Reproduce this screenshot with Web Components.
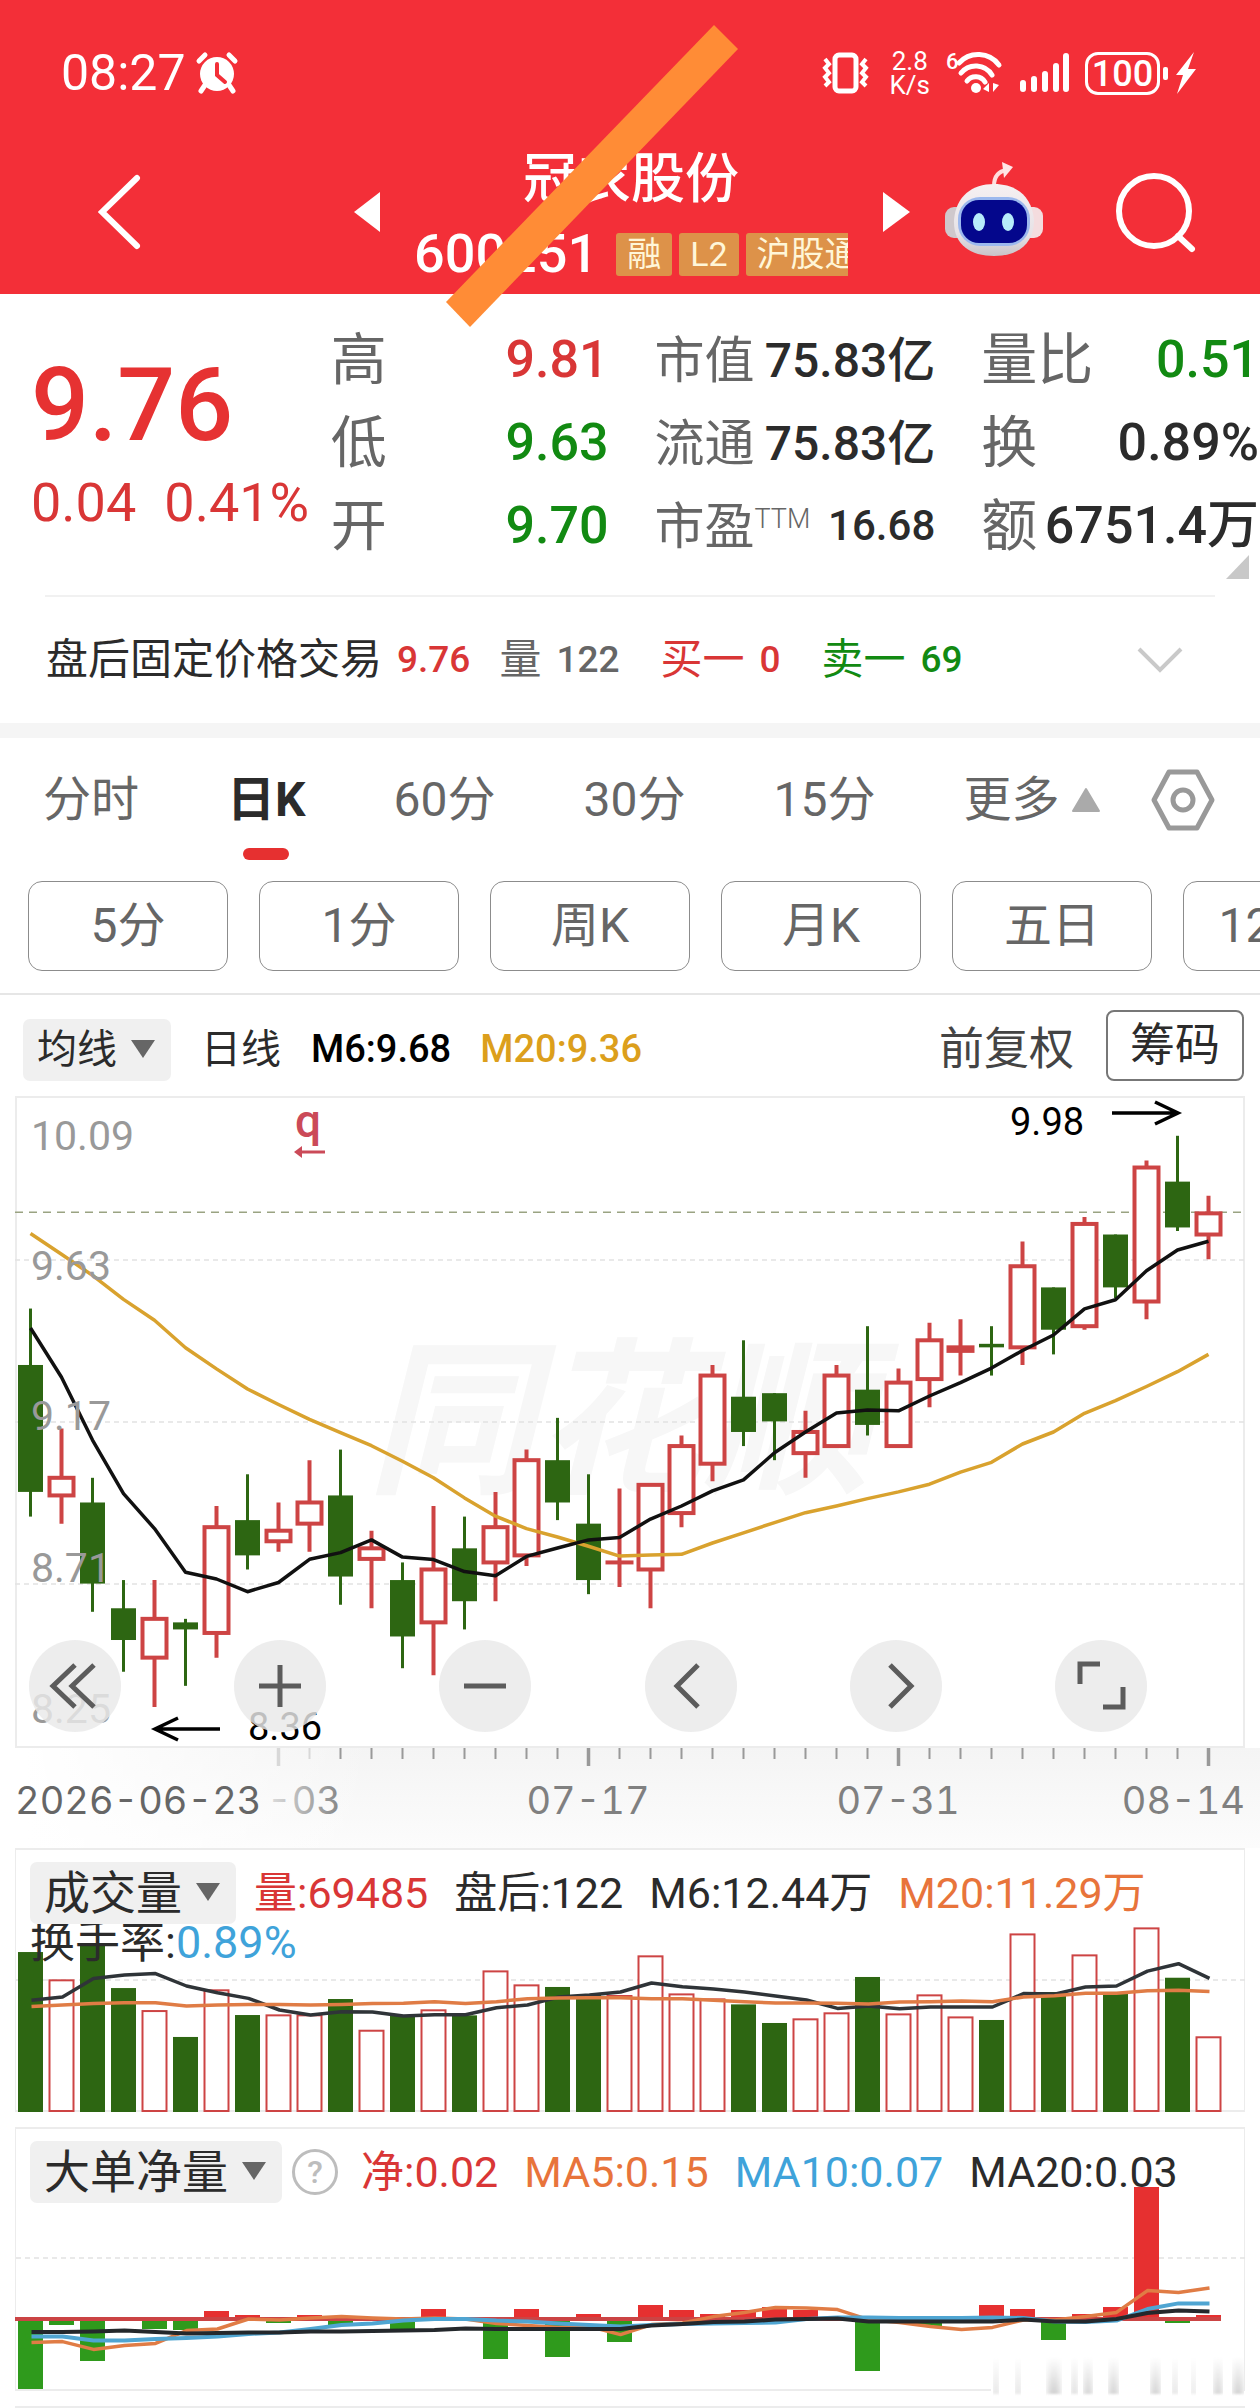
<!DOCTYPE html>
<html lang="zh-CN">
<head>
<meta charset="utf-8">
<meta name="viewport" content="width=device-width, initial-scale=1">
<title>冠农股份 600251</title>
<style>
  :root {
    --brand: #f32f38;
    --up: #d93636;
    --down: #128a12;
    --ink: #2b2b2b;
    --muted: #666;
    --line: #ececec;
    --orange: #e8743b;
    --blue: #3fa3da;
    --gold: #dc9f1c;
  }
  body {
    margin: 0;
    background: #fff;
    color: var(--ink);
    font-family: Roboto, "Noto Sans CJK SC", sans-serif;
    line-height: 1.2;
    overflow-x: hidden;
  }
</style>
</head>
<body>
<stock-page></stock-page>

<script>
/**
 * Small helper shared by every element on the page:
 * attaches an open shadow root and clones the template in.
 */
const define = (name, html, Base = HTMLElement) => {
    const template = document.createElement('template');
    template.innerHTML = html;
    window.customElements.define(name, class extends Base {
        constructor(){
            super();
            this.shadow = this.attachShadow({mode: 'open'});
            this.shadow.append(template.content.cloneNode(true));
        }
    });
};

/** Status bar **/
define('status-bar', `
<style>
  :host {
    display: flex;
    align-items: center;
    height: 146px;
    padding: 0 64px 0 61px;
    color: #fff;
  }
  svg { display: block; overflow: visible; fill: none; stroke: #fff; }
  time { font-size: 50px; margin-right: 10px; }
  .tray {
    display: flex;
    align-items: center;
    gap: 16px;
    margin-left: auto;
  }
  .speed {
    font-size: 26px;
    line-height: 24px;
    text-align: center;
  }
  .speed span { display: block; }
  .battery {
    display: flex;
    align-items: center;
    gap: 3px;
    margin-right: -8px;
  }
  .level {
    box-sizing: border-box;
    width: 75px;
    height: 43px;
    border: 3px solid #fff;
    border-radius: 13px;
    font-size: 36px;
    font-weight: 500;
    line-height: 38px;
    text-align: center;
  }
  .nub { width: 5px; height: 13px; border-radius: 2px; background: #fff; }
</style>
<time>08:27</time>
<svg width="42" height="42" viewBox="0 0 42 42" aria-label="闹钟">
  <circle cx="21" cy="22" r="17" fill="#fff" stroke="none"/>
  <path d="M3 9l6-6M33 3l6 6" stroke-width="5" stroke-linecap="round"/>
  <path d="M9 33l-4 6M33 33l4 6" stroke-width="5" stroke-linecap="round"/>
  <path d="M21 12v11l8 7" stroke="#f32f38" stroke-width="4" stroke-linecap="round"/>
</svg>
<div class="tray">
  <svg width="52" height="42" viewBox="0 0 52 42" aria-label="振动">
    <rect x="13" y="3" width="21" height="36" rx="4" stroke-width="5"/>
    <path d="M3 7l4 5-4 4 4 5-4 4 4 5-4 4M44 7l-4 5 4 4-4 5 4 4-4 5 4 4" stroke-width="4"/>
  </svg>
  <div class="speed"><span>2.8</span><span>K/s</span></div>
  <svg width="57" height="44" viewBox="0 0 57 44" aria-label="无线网络">
    <text x="0" y="18" font-size="22" font-weight="500" fill="#fff" stroke="none">6</text>
    <path d="M13 12a26 26 0 0 1 40 2M15 22a19 19 0 0 1 31 2M21 30a11 11 0 0 1 18 1" stroke-width="5" stroke-linecap="round"/>
    <circle cx="30" cy="37" r="5" fill="#fff" stroke="none"/>
    <path d="M37 38l6-6v9zM47 32v9l6-7z" fill="#fff" stroke="none"/>
  </svg>
  <svg width="50" height="42" viewBox="0 0 50 42" aria-label="信号">
    <path d="M4 31v6M15 27v10M26 22v15M37 14v23M47 4v33" stroke-width="6" stroke-linecap="round"/>
  </svg>
  <div class="battery"><span class="level">100</span><span class="nub"></span></div>
  <svg width="20" height="42" viewBox="0 0 20 42" aria-label="充电">
    <path d="M18 0L0 23h7L1 42 20 17h-8z" fill="#fff" stroke="none"/>
  </svg>
</div>
`);

/** Title bar with the stock name, code and tags **/
define('stock-header', `
<style>
  :host {
    display: block;
    position: relative;
    background: var(--brand);
    color: #fff;
  }
  nav {
    display: flex;
    align-items: center;
    height: 132px;
    padding: 0 62px 16px 98px;
  }
  button {
    display: block;
    padding: 0;
    border: 0;
    background: none;
    cursor: pointer;
  }
  svg { display: block; }
  .back { margin-right: auto; }
  .title {
    width: 434px;
    margin: 0 34px 0 32px;
    padding-top: 10px;
    overflow: hidden;
  }
  h1 {
    margin: 0;
    font-size: 54px;
    font-weight: 500;
    line-height: 74px;
    text-align: center;
  }
  .code {
    display: flex;
    align-items: center;
    gap: 7px;
    font-size: 54px;
    line-height: 74px;
    white-space: nowrap;
  }
  .code b { margin-right: 11px; font-weight: 500; }
  .tag {
    flex: none;
    padding: 0 11px;
    border-radius: 3px;
    background: #dd9249;
    color: #fff6d8;
    font-size: 34px;
    line-height: 43px;
  }
  .robot { margin: 0 71px 0 34px; }
  .strike {
    position: absolute;
    top: 25px;
    left: calc(50% - 184px);
    pointer-events: none;
  }
</style>
<status-bar></status-bar>
<nav>
  <button class="back" aria-label="返回">
    <svg width="44" height="76" viewBox="0 0 44 76"><path d="M39 4L4 38l35 34" fill="none" stroke="#fff" stroke-width="6" stroke-linecap="round"/></svg>
  </button>
  <button aria-label="上一只">
    <svg width="29" height="42" viewBox="0 0 29 42"><path d="M27 1v40L1 21z" fill="#fff"/></svg>
  </button>
  <div class="title">
    <h1>冠农股份</h1>
    <div class="code"><b>600251</b><span class="tag">融</span><span class="tag">L2</span><span class="tag">沪股通</span></div>
  </div>
  <button aria-label="下一只">
    <svg width="29" height="42" viewBox="0 0 29 42"><path d="M1 1v40l27-20z" fill="#fff"/></svg>
  </button>
  <button class="robot" aria-label="智能助手">
    <svg width="100" height="100" viewBox="0 0 100 100">
      <defs>
        <linearGradient id="shell" x1="0" y1="0" x2="0" y2="1"><stop offset="0" stop-color="#f6f0f2"/><stop offset=".7" stop-color="#e6e2e6"/><stop offset="1" stop-color="#c9c3c8"/></linearGradient>
      </defs>
      <path d="M49 24c0-10 5-15 13-16" fill="none" stroke="#ffdede" stroke-width="4"/>
      <path d="M57 0l11 5-9 11z" fill="#ffe6e6"/>
      <rect x="0" y="45" width="22" height="31" rx="9" fill="#cfc8cc"/>
      <rect x="76" y="45" width="22" height="31" rx="9" fill="#f4dcde"/>
      <path d="M49 22c22 0 38 12 40 36 0 24-16 36-40 36S8 82 9 58c2-24 18-36 40-36z" fill="url(#shell)"/>
      <rect x="13" y="35" width="72" height="49" rx="22" fill="#9cb8ee"/>
      <rect x="16" y="38" width="66" height="43" rx="18" fill="#04078c"/>
      <ellipse cx="34" cy="60" rx="6" ry="9" fill="#b7ecfb"/>
      <ellipse cx="63" cy="60" rx="6" ry="9" fill="#b7ecfb"/>
    </svg>
  </button>
  <button aria-label="搜索">
    <svg width="82" height="82" viewBox="0 0 82 82"><g fill="none" stroke="#fff" stroke-width="6"><circle cx="38" cy="40" r="35"/><path d="M62 65l14 13" stroke-linecap="round"/></g></svg>
  </button>
</nav>
<svg class="strike" width="292" height="303" viewBox="0 0 292 303"><path d="M268 0l24 24L24 302 0 277z" fill="#ff8c36"/></svg>
`);

/** One label / value pair of the quote grid **/
define('quote-item', `
<style>
  :host {
    display: flex;
    align-items: center;
    justify-content: space-between;
    height: 83px;
    font-size: 52px;
    font-weight: 500;
    white-space: nowrap;
  }
  :host([tone="up"]) { color: var(--up); }
  :host([tone="down"]) { color: var(--down); }
  ::slotted([slot="label"]) {
    color: var(--muted);
    font-weight: 400;
  }
</style>
<slot name="label"></slot>
<span><slot></slot></span>
`);

define('stock-quote', `
<style>
  :host {
    display: grid;
    position: relative;
    grid-template-columns: minmax(0, 251fr) minmax(0, 278fr) minmax(0, 281fr) minmax(0, 278fr);
    column-gap: 46px;
    padding: 25px 1px 27px 34px;
  }
  .price {
    margin-left: -3px;
    padding-top: 27px;
    color: #e63232;
    font-size: 102px;
    font-weight: 500;
    line-height: 118px;
    white-space: nowrap;
  }
  .change {
    display: flex;
    gap: 28px;
    color: var(--up);
    font-size: 54px;
    font-weight: 400;
    line-height: 78px;
  }
  .wide { --label: 56px; }
  .narrow { --label: 50px; }
  quote-item > span { font-size: var(--label); }
  .narrow quote-item { font-size: 48px; }
  .narrow .pe { font-size: 42px; }
  quote-item .ttm { font-size: 27px; font-weight: 300; line-height: 1; vertical-align: 16px; }
  .corner {
    position: absolute;
    right: 10px;
    bottom: 16px;
  }
</style>
<div class="price">9.76<div class="change"><span>0.04</span><span>0.41%</span></div></div>
<div class="wide">
  <quote-item tone="up"><span slot="label">高</span>9.81</quote-item>
  <quote-item tone="down"><span slot="label">低</span>9.63</quote-item>
  <quote-item tone="down"><span slot="label">开</span>9.70</quote-item>
</div>
<div class="narrow">
  <quote-item><span slot="label">市值</span>75.83亿</quote-item>
  <quote-item><span slot="label">流通</span>75.83亿</quote-item>
  <quote-item class="pe"><span slot="label">市盈<span class="ttm">TTM</span></span>16.68</quote-item>
</div>
<div class="wide">
  <quote-item tone="down"><span slot="label">量比</span>0.51</quote-item>
  <quote-item><span slot="label">换</span>0.89%</quote-item>
  <quote-item><span slot="label">额</span>6751.4万</quote-item>
</div>
<svg class="corner" width="24" height="24" viewBox="0 0 24 24"><path d="M23 0v24H0z" fill="#c8c8c8"/></svg>
`);

/** Fixed-price trading after the close **/
define('after-hours', `
<style>
  :host {
    display: block;
    border-bottom: 15px solid #f5f5f5;
    font-size: 42px;
  }
  hr { margin: 0 45px; border: 0; border-top: 2px solid #f1f1f1; }
  .row {
    display: flex;
    align-items: center;
    gap: 29px;
    height: 126px;
    padding: 0 77px 0 46px;
    white-space: nowrap;
  }
  .row span { display: flex; align-items: center; gap: 15px; }
  b { font-size: 37px; font-weight: 500; }
  .up { color: var(--up); }
  .down { color: var(--down); }
  .volume { color: var(--muted); }
  .side { margin-left: 12px; }
  button { margin-left: auto; padding: 0; border: 0; background: none; }
  svg { display: block; }
</style>
<hr>
<div class="row">
  <span>盘后固定价格交易 <b class="up">9.76</b></span>
  <span class="volume">量 <b>122</b></span>
  <span class="side up">买一 <b>0</b></span>
  <span class="side down">卖一 <b>69</b></span>
  <button aria-label="展开"><svg width="46" height="28" viewBox="0 0 46 28"><path d="M2 3l21 21L44 3" fill="none" stroke="#c9c9c9" stroke-width="4"/></svg></button>
</div>
`);

/** Period tabs and the row of extra periods **/
define('period-tabs', `
<style>
  :host { display: block; border-bottom: 2px solid #e6e6e6; }
  button {
    padding: 0;
    border: 0;
    background: none;
    color: var(--muted);
    font: inherit;
    font-size: 48px;
    white-space: nowrap;
  }
  .bar {
    display: flex;
    align-items: center;
    justify-content: space-between;
    height: 124px;
    padding: 0 45px 0 43px;
  }
  .tabs { display: flex; gap: 88px; }
  .active {
    position: relative;
    color: var(--ink);
    font-weight: 700;
  }
  .active::after {
    content: "";
    position: absolute;
    bottom: -31px;
    left: calc(50% - 23px);
    width: 46px;
    height: 12px;
    border-radius: 6px;
    background: #e63030;
  }
  .more { display: flex; align-items: center; gap: 12px; }
  svg { display: block; }
  .pills {
    display: flex;
    gap: 31px;
    padding: 19px 0 22px 28px;
    overflow: hidden;
  }
  .pills button {
    flex: none;
    box-sizing: border-box;
    width: 200px;
    height: 90px;
    border: 1px solid #8c8c8c;
    border-radius: 14px;
  }
</style>
<div class="bar">
  <div class="tabs">
    <button>分时</button>
    <button class="active">日K</button>
    <button>60分</button>
    <button>30分</button>
    <button>15分</button>
    <button class="more">更多<svg width="30" height="26" viewBox="0 0 30 26"><path d="M15 2l13 22H2z" fill="#aaa" stroke="#aaa" stroke-width="2" stroke-linejoin="round"/></svg></button>
  </div>
  <button aria-label="设置">
    <svg width="64" height="62" viewBox="0 0 64 62"><g fill="none" stroke="#999" stroke-width="5"><path d="M18 3h28l15 28-15 28H18L3 31z" stroke-linejoin="round"/><circle cx="32" cy="31" r="10"/></g></svg>
  </button>
</div>
<div class="pills">
  <button>5分</button>
  <button>1分</button>
  <button>周K</button>
  <button>月K</button>
  <button>五日</button>
  <button>120分</button>
</div>
`);

/** Grey drop-down chip **/
define('chip-select', `
<style>
  :host {
    display: inline-block;
    position: relative;
    flex: none;
  }
  select {
    display: block;
    height: 62px;
    padding: 0 54px 0 14px;
    border: 0;
    border-radius: 7px;
    appearance: none;
    background: #f0f0f0;
    color: var(--ink);
    font: inherit;
  }
  svg {
    position: absolute;
    top: 20px;
    right: 15px;
    pointer-events: none;
  }
</style>
<select><option></option></select>
<svg width="26" height="20" viewBox="0 0 26 20"><path d="M1 1h24L13 19z" fill="#666"/></svg>
`, class extends HTMLElement {
    connectedCallback(){
        let select = this.shadowRoot.querySelector('select');
        select.setAttribute('aria-label', this.getAttribute('label'));
        select.options[0].textContent = this.getAttribute('value');
    }
});

define('chart-toolbar', `
<style>
  :host {
    display: flex;
    align-items: center;
    height: 93px;
    padding: 8px 16px 0 23px;
    font-size: 40px;
    white-space: nowrap;
  }
  .name { margin: 0 30px; }
  .ma { margin-right: 29px; color: #000; font-size: 38px; font-weight: 500; }
  .gold { color: var(--gold); }
  button {
    border: 0;
    background: none;
    color: var(--ink);
    font: inherit;
    font-size: 45px;
  }
  .adjust { margin-left: auto; margin-right: 32px; padding: 0; color: #444; }
  .chips {
    box-sizing: border-box;
    height: 71px;
    margin-bottom: 8px;
    padding: 0 22px;
    border: 2px solid #777;
    border-radius: 8px;
  }
</style>
<chip-select label="主图指标" value="均线"></chip-select>
<span class="name">日线</span>
<span class="ma">M6:9.68</span>
<span class="ma gold">M20:9.36</span>
<button class="adjust">前复权</button>
<button class="chips">筹码</button>
`);

/** Chart data: [rising, high, body top, body bottom, low] for each day **/
const candles = [
    [0, 9.49, 9.33, 8.97, 8.90], [1, 9.15, 9.01, 8.96, 8.88], [0, 9.01, 8.94, 8.71, 8.63],
    [0, 8.72, 8.64, 8.55, 8.46], [1, 8.72, 8.61, 8.50, 8.36], [0, 8.61, 8.60, 8.58, 8.42],
    [1, 8.93, 8.87, 8.57, 8.50], [0, 9.02, 8.89, 8.79, 8.75], [1, 8.94, 8.86, 8.83, 8.80],
    [1, 9.06, 8.94, 8.88, 8.80], [0, 9.09, 8.96, 8.73, 8.65], [1, 8.86, 8.81, 8.78, 8.64],
    [0, 8.77, 8.72, 8.56, 8.47], [1, 8.93, 8.75, 8.60, 8.45], [0, 8.90, 8.81, 8.66, 8.58],
    [1, 8.97, 8.87, 8.77, 8.66], [1, 9.09, 9.06, 8.79, 8.76], [0, 9.18, 9.06, 8.94, 8.89],
    [0, 9.02, 8.88, 8.72, 8.68], [1, 8.98, 8.77, 8.77, 8.70], [1, 8.99, 8.99, 8.75, 8.64],
    [1, 9.13, 9.10, 8.91, 8.87], [1, 9.33, 9.30, 9.05, 9.00], [0, 9.40, 9.24, 9.14, 9.10],
    [0, 9.25, 9.25, 9.17, 9.06], [1, 9.20, 9.14, 9.08, 9.01], [1, 9.33, 9.30, 9.10, 9.10],
    [0, 9.44, 9.26, 9.16, 9.13], [1, 9.32, 9.28, 9.10, 9.10], [1, 9.45, 9.40, 9.29, 9.21],
    [1, 9.46, 9.38, 9.37, 9.30], [0, 9.44, 9.39, 9.38, 9.30], [1, 9.68, 9.61, 9.38, 9.33],
    [0, 9.55, 9.55, 9.43, 9.36], [1, 9.75, 9.73, 9.44, 9.43], [0, 9.70, 9.70, 9.55, 9.52],
    [1, 9.91, 9.89, 9.51, 9.46], [0, 9.98, 9.85, 9.72, 9.71], [1, 9.81, 9.76, 9.70, 9.63]
];
const priceM6 = [
    9.435, 9.295, 9.117, 8.965, 8.866, 8.742, 8.723, 8.687, 8.713, 8.779, 8.798, 8.834, 8.785,
    8.778, 8.744, 8.732, 8.787, 8.811, 8.834, 8.841, 8.893, 8.930, 8.973, 9.004, 9.081, 9.140,
    9.194, 9.202, 9.200, 9.242, 9.280, 9.321, 9.371, 9.415, 9.489, 9.515, 9.597, 9.656, 9.681
];
const priceM20 = [
    9.703, 9.644, 9.584, 9.516, 9.457, 9.379, 9.319, 9.262, 9.218, 9.176, 9.138, 9.101, 9.057,
    9.010, 8.953, 8.901, 8.866, 8.842, 8.816, 8.788, 8.791, 8.793, 8.825, 8.854, 8.883, 8.911,
    8.930, 8.951, 8.970, 8.992, 9.026, 9.054, 9.106, 9.140, 9.193, 9.229, 9.269, 9.311, 9.360
];
const volumes = [
    14.88, 12.25, 15.53, 11.53, 9.39, 6.98, 11.32, 9.02, 8.99, 8.99, 10.51, 7.56, 9.02,
    9.46, 8.99, 13.08, 11.78, 11.63, 10.88, 10.79, 14.48, 10.94, 10.48, 10.01, 8.28, 8.62,
    9.18, 12.56, 9.08, 10.85, 8.80, 8.56, 16.52, 11.16, 14.57, 11.16, 17.08, 12.49, 6.95
];
const volumeM6 = [
    10.39, 10.70, 12.43, 12.74, 12.87, 11.72, 11.10, 10.57, 9.49, 9.02, 9.33, 9.30, 8.93,
    9.05, 9.05, 9.70, 9.95, 10.70, 10.88, 11.16, 12.00, 11.66, 11.44, 11.16, 10.79, 10.42,
    9.64, 9.86, 9.61, 9.77, 9.77, 9.77, 11.01, 10.97, 11.63, 11.72, 13.11, 13.80, 12.44
];
const volumeM20 = [
    9.80, 9.95, 10.08, 10.17, 10.17, 9.86, 9.95, 10.01, 10.01, 9.95, 10.01, 10.08, 10.11,
    10.26, 10.08, 10.26, 10.54, 10.60, 10.63, 10.63, 10.54, 10.54, 10.39, 10.26, 10.14, 10.14,
    10.11, 10.04, 10.23, 10.26, 10.32, 10.26, 10.70, 10.82, 11.04, 11.04, 11.28, 11.32, 11.20
];
const nets = [
    -.35, -.03, -.21, -.01, -.05, -.055, .04, .02, -.02, .02, -.035, -.01, -.055,
    .05, 0, -.20, .05, -.19, .025, -.115, .07, .045, .025, .045, .06, .045,
    .01, -.26, 0, -.035, 0, .07, .05, -.105, .025, .06, .66, -.02, .02
];
const netMA5 = [
    -.117, -.113, -.152, -.133, -.122, -.058, -.05, 0, -.005, .005, .013, .005, 0,
    .005, 0, -.022, -.033, -.042, -.038, -.078, -.028, -.02, .012, .033, .058, .055,
    .047, -.003, -.017, -.037, -.052, -.042, -.005, -.005, .012, .033, .142, .133, .155
];
const netMA10 = [
    -.088, -.088, -.108, -.108, -.1, -.095, -.088, -.075, -.067, -.05, -.03, -.022, -.008,
    0, 0, -.008, -.012, -.022, -.03, -.038, -.03, -.025, -.022, -.02, -.018, 0,
    .008, .008, .005, .005, .005, .008, .005, -.012, -.015, -.008, .05, .078, .078
];
const netMA20 = [
    -.065, -.065, -.062, -.058, -.065, -.072, -.07, -.068, -.067, -.063, -.062, -.06, -.058,
    -.055, -.048, -.05, -.05, -.05, -.05, -.05, -.033, -.025, -.015, -.012, -.003, 0,
    .002, -.012, -.013, -.013, -.013, -.012, -.003, -.012, -.012, 0, .03, .042, .037
];

const GREEN = '#2d6612';
const RED = '#cd4444';

/** Utility functions for drawing the charts **/
const dayX = (i) => 15.5 + i * 31;

const polyline = (values, toY, color, width) => {
    let points = values.map((v, i) => `${dayX(i)},${toY(v).toFixed(1)}`).join(' ');
    return `<polyline points="${points}" fill="none" stroke="${color}" stroke-width="${width}" stroke-linejoin="round"/>`;
};

const gridLine = (y, color = '#e2e2e2', dash = '5 4') => {
    return `<path d="M0 ${y}H1230" stroke="${color}" stroke-width="1.5" stroke-dasharray="${dash}"/>`;
};

const chartStyle = `
<style>
  :host { display: block; position: relative; }
  svg { display: block; width: 100%; height: auto; overflow: visible; }
</style>
`;

/** Main candlestick chart **/
define('kline-chart', `
${chartStyle}
<style>
  :host { margin: 0 15px; border: 2px solid var(--line); border-width: 2px 0; }
  .controls {
    display: flex;
    position: absolute;
    right: 0;
    bottom: 14px;
    left: 0;
    justify-content: space-between;
    padding: 0 98px 0 14px;
  }
  button {
    width: 92px;
    height: 92px;
    padding: 0;
    border: 0;
    border-radius: 50%;
    background: rgba(233, 233, 233, 0.82);
  }
  button svg { width: 92px; height: 92px; fill: none; stroke: #5c5c5c; stroke-width: 5; }
</style>
<svg class="plot" viewBox="0 0 1230 648"></svg>
<div class="controls">
  <button aria-label="最左"><svg viewBox="0 0 92 92"><path d="M46 25L24 46l22 21M65 25L43 46l22 21"/></svg></button>
  <button aria-label="放大"><svg viewBox="0 0 92 92"><path d="M46 25v42M25 46h42"/></svg></button>
  <button aria-label="缩小"><svg viewBox="0 0 92 92"><path d="M25 46h42"/></svg></button>
  <button aria-label="左移"><svg viewBox="0 0 92 92"><path d="M53 25L32 46l21 21"/></svg></button>
  <button aria-label="右移"><svg viewBox="0 0 92 92"><path d="M40 25l21 21-21 21"/></svg></button>
  <button aria-label="全屏"><svg viewBox="0 0 92 92"><path d="M45 24H25v20M68 47v20H48"/></svg></button>
</div>
`, class extends HTMLElement {
    connectedCallback(){
        let toY = (price) => (10.09 - price) * 352.6 - 1;
        let out = `<path d="M1 0V648M1229 0V648" stroke="#ececec" stroke-width="2"/>`;
        out += `<text x="352" y="382" font-size="168" font-weight="700" font-style="italic" fill="#f7f7f7">同花顺</text>`;
        out += gridLine(162) + gridLine(324) + gridLine(486);
        out += gridLine(toY(9.76) - 1, '#9aa382', '8 6');

        candles.forEach(([rising, high, top, bottom, low], i) => {
            let x = dayX(i);
            let [yh, yt, yb, yl] = [high, top, bottom, low].map(toY);
            if(rising){
                out += `<path d="M${x} ${yh}V${yt}M${x} ${yb}V${yl}" stroke="${RED}" stroke-width="4"/>`;
                out += `<rect x="${x - 12}" y="${yt}" width="24" height="${yb - yt}" fill="#fff" stroke="${RED}" stroke-width="4"/>`;
                // open equals close: a rect without height is not drawn
                if(yt === yb){
                    out += `<path d="M${x - 14} ${yt}h28" stroke="${RED}" stroke-width="4"/>`;
                }
            } else {
                out += `<path d="M${x} ${yh}V${yl}" stroke="${GREEN}" stroke-width="3"/>`;
                out += `<rect x="${x - 12.5}" y="${yt}" width="25" height="${yb - yt}" fill="${GREEN}"/>`;
            }
        });

        out += polyline(priceM20, toY, '#d9a22e', 3.5);
        out += polyline(priceM6, toY, '#111', 3.5);

        // price scale
        [['10.09', 52], ['9.63', 182], ['9.17', 332], ['8.71', 484], ['8.25', 625]].forEach(([label, y]) => {
            out += `<text x="16" y="${y}" font-size="41" fill="#999">${label}</text>`;
        });

        // highest and lowest price
        out += `<text x="995" y="37" font-size="38" fill="#000">9.98</text>`;
        out += `<path d="M1097 15H1162M1140 4l23 11-23 11" fill="none" stroke="#000" stroke-width="3.5"/>`;
        out += `<text x="233" y="642" font-size="38" fill="#000">8.36</text>`;
        out += `<path d="M205 631H140M163 620l-23 11 23 11" fill="none" stroke="#000" stroke-width="3.5"/>`;

        // ex-rights marker
        out += `<text x="280" y="39" font-size="46" font-weight="500" fill="#cb4a58">q</text>`;
        out += `<path d="M310 54H284" stroke="#cb4a58" stroke-width="3"/><path d="M279 54l8-6v12z" fill="#cb4a58"/>`;
        this.shadowRoot.querySelector('.plot').innerHTML = out;
    }
});

define('time-axis', `
${chartStyle}
<style>
  :host {
    padding: 0 15px;
    background: linear-gradient(90deg, #fff 2%, rgba(255, 255, 255, 0) 30%), linear-gradient(#f4f4f4, #fcfcfc);
  }
  text { font-family: Inter, Roboto, sans-serif; font-size: 38px; font-variant-numeric: tabular-nums; }
</style>
<svg class="plot" viewBox="0 0 1230 100"></svg>
`, class extends HTMLElement {
    connectedCallback(){
        let out = `<defs><linearGradient id="fade"><stop offset="0" stop-color="#e0e0e0"/><stop offset="1" stop-color="#868686"/></linearGradient></defs>`;
        for(let i = 8; i < candles.length; i++){
            let major = i % 10 === 8;
            let color = i < 10 ? '#d8d8d8' : '#999';
            out += `<path d="M${dayX(i)} 0v${major ? 18 : 11}" stroke="${color}" stroke-width="${major ? 3.5 : 2}"/>`;
        }
        out += `<text x="0" y="66" fill="#666">2026-06-23</text>`;
        out += `<text x="326" y="66" fill="url(#fade)" text-anchor="end">-03</text>`;
        out += `<text x="573" y="66" fill="#808080" text-anchor="middle">07-17</text>`;
        out += `<text x="883" y="66" fill="#808080" text-anchor="middle">07-31</text>`;
        out += `<text x="1230" y="66" fill="#808080" text-anchor="end">08-14</text>`;
        this.shadowRoot.querySelector('.plot').innerHTML = out;
    }
});

/** Indicator frame: chart in the default slot, readings laid over it **/
define('indicator-panel', `
<style>
  :host {
    display: block;
    position: relative;
    margin: 0 15px 15px;
    border: 2px solid var(--line);
    border-width: 2px 1px;
  }
  .legend {
    display: flex;
    position: absolute;
    top: 12px;
    right: 0;
    left: 14px;
    flex-wrap: wrap;
    align-items: center;
    column-gap: 26px;
    font-size: 43px;
    line-height: 62px;
    white-space: nowrap;
  }
  ::slotted(chip-select) { font-size: 46px; margin-right: -8px; }
</style>
<slot></slot>
<div class="legend"><slot name="legend"></slot></div>
`);

define('volume-chart', `
${chartStyle}
<svg class="plot" viewBox="0 0 1228 260"></svg>
`, class extends HTMLElement {
    connectedCallback(){
        let base = 262;
        let toY = (v) => base - v * 10.75;
        let out = gridLine(130);
        volumes.forEach((v, i) => {
            let x = dayX(i) - 1;
            if(candles[i][0]){
                out += `<rect x="${x - 12}" y="${toY(v)}" width="24" height="${base - toY(v) - 1}" fill="#fff" stroke="${RED}" stroke-width="2"/>`;
            } else {
                out += `<rect x="${x - 12.5}" y="${toY(v)}" width="25" height="${base - toY(v)}" fill="${GREEN}"/>`;
            }
        });
        out += polyline(volumeM6, toY, '#2f3438', 3.5);
        out += polyline(volumeM20, toY, '#e07c45', 3.5);
        this.shadowRoot.querySelector('.plot').innerHTML = out;
    }
});

define('net-chart', `
${chartStyle}
<svg class="plot" viewBox="0 0 1228 260"></svg>
`, class extends HTMLElement {
    connectedCallback(){
        let toY = (v) => 190 - v * 200;
        let out = gridLine(129);
        nets.forEach((v, i) => {
            let y = Math.min(toY(v), 190);
            let color = v > 0 ? '#e63030' : '#2f9a1c';
            out += `<rect x="${dayX(i) - 13.5}" y="${y}" width="25" height="${Math.abs(toY(v) - 190)}" fill="${color}"/>`;
        });
        out += `<path d="M-1 190H1205" stroke="#cb4444" stroke-width="4"/>`;
        out += polyline(netMA5, toY, '#e07c45', 3.5);
        out += polyline(netMA10, toY, '#4fa5d2', 4);
        out += polyline(netMA20, toY, '#24282c', 4);

        // faded stamp in the corner
        out += `<defs><linearGradient id="stamp" x1="0" y1="0" x2="0" y2="1"><stop offset="0" stop-color="#fff"/><stop offset="1" stop-color="#cfcfcf"/></linearGradient><filter id="soft"><feGaussianBlur stdDeviation="3 1"/></filter></defs>`;
        out += `<rect x="975" y="232" width="253" height="34" fill="#fff"/>`;
        [[978, 4], [1000, 4], [1032, 12], [1056, 5], [1068, 8], [1093, 9], [1135, 9], [1157, 4], [1176, 3], [1198, 8], [1217, 10]].forEach(([x, w]) => {
            out += `<rect x="${x}" y="228" width="${w}" height="37" fill="url(#stamp)" filter="url(#soft)"/>`;
        });
        this.shadowRoot.querySelector('.plot').innerHTML = out;
    }
});

/** The whole page **/
define('stock-page', `
<style>
  :host { display: block; overflow: hidden; }
  .up { color: var(--up); }
  .orange { color: var(--orange); }
  .blue { color: var(--blue); }
  .turnover { flex-basis: 100%; margin-top: -6px; font-size: 45px; line-height: 50px; }
  .help {
    box-sizing: border-box;
    width: 46px;
    height: 46px;
    margin: 0 -3px 0 -8px;
    padding: 0;
    border: 3px solid #bdbdbd;
    border-radius: 50%;
    background: none;
    color: #bdbdbd;
    font: 500 32px/38px Roboto, sans-serif;
  }
  footer { margin: 0 15px; border-top: 3px solid var(--line); }
</style>
<stock-header></stock-header>
<stock-quote></stock-quote>
<after-hours></after-hours>
<period-tabs></period-tabs>
<chart-toolbar></chart-toolbar>
<kline-chart></kline-chart>
<time-axis></time-axis>
<indicator-panel>
  <volume-chart></volume-chart>
  <chip-select slot="legend" label="副图指标一" value="成交量"></chip-select>
  <span slot="legend" class="up">量:69485</span>
  <span slot="legend">盘后:122</span>
  <span slot="legend">M6:12.44万</span>
  <span slot="legend" class="orange">M20:11.29万</span>
  <span slot="legend" class="turnover">换手率:<span class="blue">0.89%</span></span>
</indicator-panel>
<indicator-panel>
  <net-chart></net-chart>
  <chip-select slot="legend" label="副图指标二" value="大单净量"></chip-select>
  <button slot="legend" class="help" aria-label="说明">?</button>
  <span slot="legend" class="up">净:0.02</span>
  <span slot="legend" class="orange">MA5:0.15</span>
  <span slot="legend" class="blue">MA10:0.07</span>
  <span slot="legend">MA20:0.03</span>
</indicator-panel>
<footer></footer>
`);
</script>
</body>
</html>
